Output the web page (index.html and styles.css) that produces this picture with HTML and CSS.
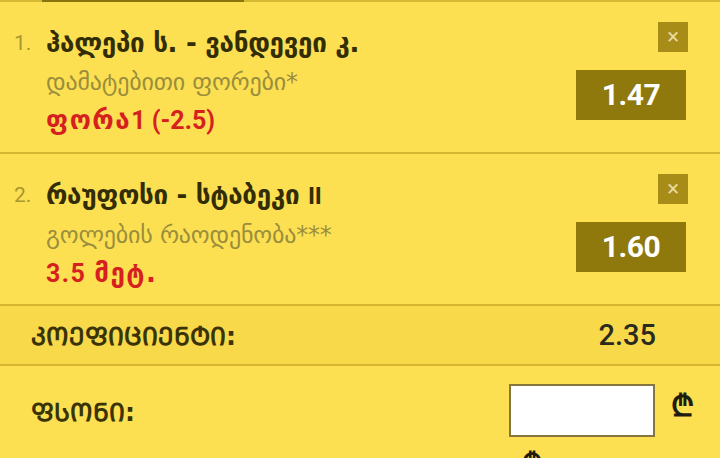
FILE: index.html
```html
<!DOCTYPE html>
<html lang="ka">
<head>
<meta charset="utf-8">
<link rel="stylesheet" href="styles.css">
</head>
<body>
<div class="slip">
  <div class="tabs"><span class="tab-a"></span><span class="tab-active"></span><span class="tab-b"></span></div>
  <div class="bet">
    <div class="num">1.</div>
    <div class="info">
      <div class="title">ჰალეპი ს. - ვანდევეი კ.</div>
      <div class="market">დამატებითი ფორები*</div>
      <div class="pick">ფორა<span class="digits">1 (-2.5)</span></div>
    </div>
    <div class="side">
      <span class="close">×</span>
      <div class="odds">1.47</div>
    </div>
  </div>
  <div class="bet">
    <div class="num">2.</div>
    <div class="info">
      <div class="title">რაუფოსი - სტაბეკი <span class="latin">II</span></div>
      <div class="market">გოლების რაოდენობა***</div>
      <div class="pick"><span class="digits wide">3.5 </span>მეტ.</div>
    </div>
    <div class="side">
      <span class="close">×</span>
      <div class="odds">1.60</div>
    </div>
  </div>
  <div class="total">
    <span class="label">ᲙᲝᲔᲤᲘᲪᲘᲔᲜᲢᲘ:</span>
    <span class="value">2.35</span>
  </div>
  <div class="stake">
    <span class="label">ᲤᲡᲝᲜᲘ:</span>
    <input class="amount" type="text">
    <span class="lari">₾</span>
  </div>
  <div class="more"><span class="lari-small">₾</span></div>
</div>
</body>
</html>
```
FILE: styles.css
```css
html, body {
  margin: 0;
  padding: 0;
  background: #fde052;
}
body {
  width: 720px;
  height: 458px;
  overflow: hidden;
  font-family: "Roboto", "DejaVu Sans", sans-serif;
}
.slip {
  display: flex;
  flex-direction: column;
}
.tabs {
  display: flex;
  height: 2px;
}
.tab-a { width: 42px; background: #d6ba33; }
.tab-active { width: 202px; background: #8a7410; }
.tab-b { flex: 1; background: #d6ba33; }

.bet {
  display: flex;
  align-items: flex-start;
  height: 152px;
  box-sizing: border-box;
  padding: 20px 32px 0 14px;
  border-bottom: 2px solid #d4b630;
}
.num {
  width: 32px;
  padding-top: 5px;
  line-height: 32px;
  font-size: 21px;
  color: #a8982e;
}
.info {
  flex: 1;
  padding-top: 5px;
}
.title {
  font-family: "DejaVu Sans", sans-serif;
  font-size: 26px;
  line-height: 32px;
  font-weight: bold;
  color: #322d04;
  letter-spacing: -0.3px;
}
.title .latin {
  font-family: "Roboto", sans-serif;
  font-size: 24px;
}
.market {
  margin-top: 4px;
  font-family: "DejaVu Sans", sans-serif;
  font-size: 24px;
  line-height: 38px;
  color: #9a8e3d;
  letter-spacing: -0.2px;
}
.pick {
  font-family: "DejaVu Sans", sans-serif;
  font-size: 26px;
  line-height: 38px;
  font-weight: bold;
  color: #d61f1f;
  letter-spacing: 1.5px;
}
.pick .digits {
  font-family: "Roboto", sans-serif;
  font-size: 25px;
  font-weight: bold;
  letter-spacing: 0;
}
.pick .wide {
  letter-spacing: 1.5px;
}
.side {
  display: flex;
  flex-direction: column;
  align-items: flex-end;
}
.close {
  width: 30px;
  height: 30px;
  background: #a88c18;
  color: #e6dba0;
  font-size: 22px;
  line-height: 30px;
  text-align: center;
}
.odds {
  margin-top: 18px;
  margin-right: 2px;
  width: 110px;
  height: 50px;
  background: #8f780c;
  color: #ffffff;
  font-size: 30px;
  font-weight: bold;
  line-height: 50px;
  text-align: center;
  letter-spacing: -0.5px;
}
.total {
  display: flex;
  justify-content: space-between;
  align-items: center;
  height: 58px;
  padding: 0 64px 0 31px;
  background: #f8d94a;
  border-bottom: 2px solid #d4b630;
}
.label {
  font-family: "DejaVu Sans", sans-serif;
  font-size: 25px;
  font-weight: bold;
  color: #3a3306;
}
.value {
  font-size: 29px;
  font-weight: 500;
  color: #2b2a1e;
}
.stake {
  display: flex;
  align-items: flex-start;
  height: 80px;
  box-sizing: border-box;
  padding: 18px 26px 0 31px;
}
.stake .label {
  flex: 1;
  margin-top: 14px;
  line-height: 30px;
}
.amount {
  width: 146px;
  height: 53px;
  box-sizing: border-box;
  border: 2px solid #857640;
  background: #ffffff;
  margin: 0;
  padding: 0;
}
.lari {
  margin-left: 16px;
  margin-top: 4px;
  font-family: "DejaVu Sans", sans-serif;
  font-size: 30px;
  font-weight: bold;
  line-height: 36px;
  color: #1f1d10;
}
.more {
  padding-left: 522px;
  padding-top: 3px;
}
.lari-small {
  font-family: "DejaVu Sans", sans-serif;
  font-size: 26px;
  font-weight: bold;
  line-height: 26px;
  color: #1f1d10;
}
```
